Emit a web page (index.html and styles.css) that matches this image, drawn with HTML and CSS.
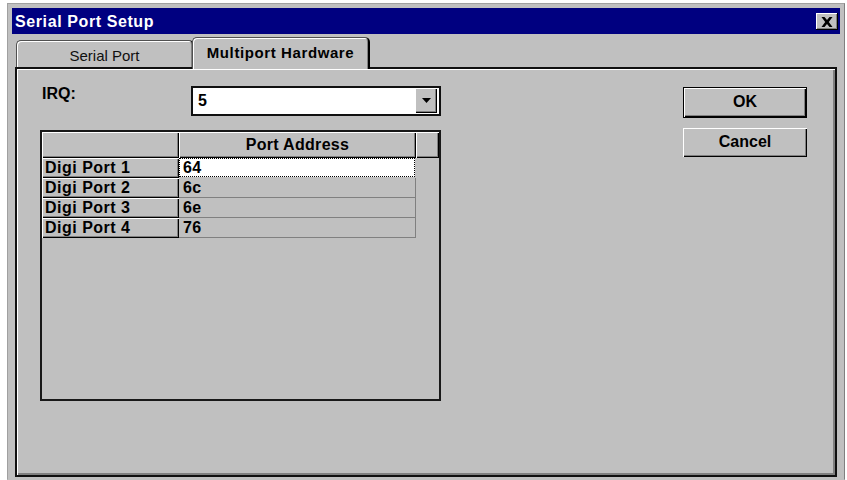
FILE: index.html
```html
<!DOCTYPE html>
<html>
<head>
<meta charset="utf-8">
<title>Serial Port Setup</title>
<link rel="stylesheet" href="styles.css">
</head>
<body>
<div class="window">
  <div class="titlebar">
    <span class="title">Serial Port Setup</span>
    <div class="close">
      <svg width="12" height="10" viewBox="0 0 12 10"><path d="M0.5 0h3l2.5 3 2.5-3h3L7.8 5l3.7 5h-3L6 7 3.5 10h-3l3.7-5z" fill="#000"/></svg>
    </div>
  </div>
  <div class="client">
    <div class="tabs">
      <div class="tab">Serial Port</div>
      <div class="tab active">Multiport Hardware</div>
    </div>
    <div class="panel">
      <div class="main">
        <div class="irq">
          <label class="irq-label">IRQ:</label>
          <div class="combo">
            <span class="combo-value">5</span>
            <div class="combo-btn">
              <svg width="9" height="5" viewBox="0 0 9 5"><path d="M0 0h9L4.5 5z" fill="#000"/></svg>
            </div>
          </div>
        </div>
        <div class="grid">
          <div class="hcell"></div>
          <div class="hcell hcenter">Port Address</div>
          <div class="hcell"></div>

          <div class="hcell rowhead">Digi Port 1</div>
          <div class="cell focus"><span class="focus-box">64</span></div>
          <div class="spacer"></div>

          <div class="hcell rowhead">Digi Port 2</div>
          <div class="cell">6c</div>
          <div class="spacer"></div>

          <div class="hcell rowhead">Digi Port 3</div>
          <div class="cell">6e</div>
          <div class="spacer"></div>

          <div class="hcell rowhead">Digi Port 4</div>
          <div class="cell">76</div>
          <div class="spacer"></div>
        </div>
      </div>
      <div class="buttons">
        <div class="btn default">OK</div>
        <div class="btn">Cancel</div>
      </div>
    </div>
  </div>
</div>
</body>
</html>
```
FILE: styles.css
```css
* { box-sizing: border-box; }

html, body {
  margin: 0;
  height: 100%;
}

body {
  background: #ffffff;
  overflow: hidden;
  font-family: "Liberation Sans", Arial, sans-serif;
  color: #000;
}

/* dialog frame */
.window {
  margin: 3px 0 0 7px;
  width: 838px;
  height: 477px;
  background: #c0c0c0;
  border: 1px solid;
  border-color: #a0a0a0 #808080 #c0c0c0 #a0a0a0;
  padding: 4px 4px 2px 4px;
  display: flex;
  flex-direction: column;
}

.titlebar {
  height: 26px;
  flex: none;
  background: #000080;
  display: flex;
  align-items: center;
  justify-content: space-between;
  padding: 0 2px 0 3px;
}

.title {
  color: #fff;
  font-weight: bold;
  font-size: 16px;
  letter-spacing: 0.6px;
  line-height: 24px;
  padding-top: 2px;
}

.close {
  width: 22px;
  height: 17px;
  margin-top: 1px;
  background: #c0c0c0;
  box-shadow: inset -1px -1px #000, inset 1px 1px #fff, inset -2px -2px #808080;
  display: flex;
  align-items: center;
  justify-content: center;
}

.client {
  flex: 1;
  display: flex;
  flex-direction: column;
  padding: 0 3px;
}

/* tab strip */
.tabs {
  display: flex;
  align-items: flex-end;
  height: 32px;
  margin-top: 3px;
  margin-bottom: -2px;
  padding-left: 1px;
}

.tab {
  width: 178px;
  height: 27px;
  margin-bottom: 2px;
  background: #c0c0c0;
  border: 1px solid #505050;
  border-bottom: none;
  border-right: 2px solid #000;
  border-radius: 5px 5px 0 0;
  box-shadow: inset 1px 1px #fff, inset -1px 0 #808080;
  font-size: 15px;
  line-height: 29px;
  text-align: center;
  color: #101010;
}

.tab.active {
  position: relative;
  z-index: 1;
  width: 178px;
  height: 32px;
  margin-bottom: 0;
  margin-left: -2px;
  font-weight: bold;
  letter-spacing: 0.6px;
  line-height: 30px;
  color: #000;
}

/* tab page */
.panel {
  flex: 1;
  position: relative;
  border: 2px solid #101010;
  box-shadow: inset 1px 1px #fff, inset -2px -2px #808080;
  display: flex;
  padding: 17px 28px 0 23px;
}

.main {
  width: 401px;
  display: flex;
  flex-direction: column;
}

.irq {
  display: flex;
  height: 30px;
}

.irq-label {
  width: 149px;
  margin-left: 2px;
  font-weight: bold;
  font-size: 16px;
  line-height: 16px;
}

.combo {
  width: 250px;
  height: 30px;
  border: 2px solid #101010;
  background: #fff;
  display: flex;
  align-items: center;
  justify-content: space-between;
  padding-left: 5px;
  padding-right: 2px;
}

.combo-value {
  font-weight: bold;
  font-size: 16px;
}

.combo-btn {
  width: 22px;
  height: 25px;
  align-self: flex-start;
  background: #c0c0c0;
  box-shadow: inset 1px 1px #fff, inset -1px -1px #000, inset -2px -2px #808080;
  display: flex;
  align-items: center;
  justify-content: center;
}

/* port address table */
.grid {
  margin-top: 14px;
  height: 271px;
  border: 2px solid #181818;
  background: #c0c0c0;
  display: grid;
  grid-template-columns: 137px 237px 23px;
  grid-template-rows: 26px repeat(4, 20px);
  align-content: start;
  font-size: 16px;
  font-weight: bold;
  letter-spacing: 0.3px;
}

.hcell {
  background: #c0c0c0;
  box-shadow: inset 1px 1px #fff, inset -1px -1px #000, inset -2px -2px #808080;
  line-height: 26px;
}

.hcenter {
  text-align: center;
}

.rowhead {
  line-height: 20px;
  padding-left: 3px;
  letter-spacing: 0.5px;
}

.cell {
  border-right: 1px solid #808080;
  border-bottom: 1px solid #808080;
  line-height: 19px;
  padding-left: 4px;
}

.cell.focus {
  background: #fff;
  padding: 0;
  border-color: #c0c0c0;
}

.focus-box {
  display: block;
  height: 100%;
  border: 1px dotted #000;
  line-height: 18px;
  padding-left: 3px;
}

/* dialog buttons */
.buttons {
  margin-left: auto;
  width: 124px;
  padding-top: 1px;
  display: flex;
  flex-direction: column;
  gap: 10px;
}

.btn {
  height: 29px;
  background: #c0c0c0;
  box-shadow: inset 1px 1px #fff, inset -1px -1px #000, inset -2px -2px #808080;
  font-size: 16px;
  font-weight: bold;
  text-align: center;
  line-height: 28px;
}

.btn.default {
  height: 31px;
  border: 1px solid #000;
  line-height: 28px;
}
```
